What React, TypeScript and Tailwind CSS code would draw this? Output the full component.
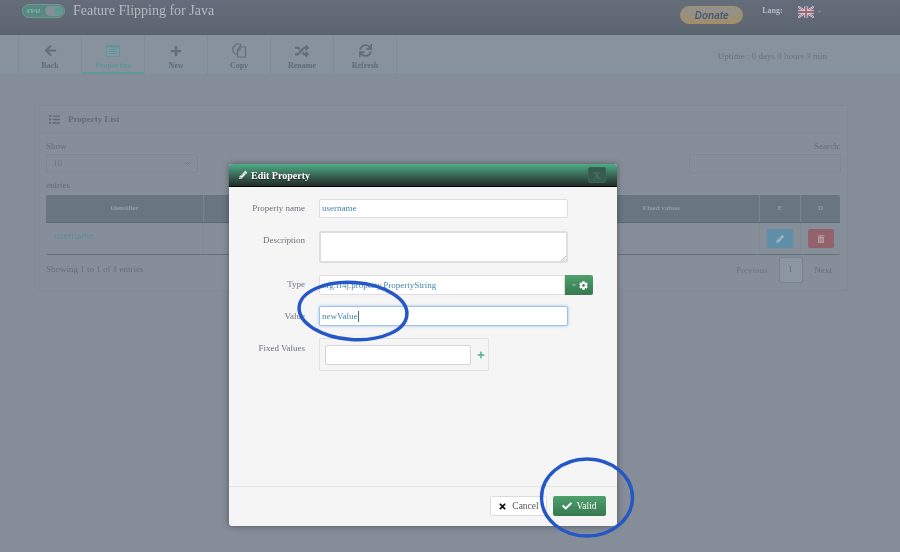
import { FaArrowLeft, FaPlus, FaRandom, FaSync, FaPencilAlt, FaTrashAlt, FaCog, FaCheck, FaTimes, FaCaretDown, FaList } from "react-icons/fa";

const serif = "font-['Liberation_Serif','Times_New_Roman',serif]";

function PropsIcon() {
  return (
    <svg width="14" height="12" viewBox="0 0 14 12" fill="none">
      <rect x="0" y="0" width="14" height="12" rx="1" fill="#64949a" />
      <rect x="1" y="2.5" width="12" height="8.5" fill="#7f9aa2" />
      <path d="M3 4.5h8M3 6.5h8M3 8.5h8" stroke="#64949a" strokeWidth="1" />
    </svg>
  );
}

function CopyIcon() {
  return (
    <svg width="15" height="15" viewBox="0 0 15 15" fill="none" stroke="currentColor" strokeWidth="1.2" strokeLinejoin="round">
      <path d="M1 8.5V4.5L4.5 1H8.5V4" />
      <path d="M1 8.5L3 11H5.5" />
      <path d="M5.5 14V6.5L7.5 4H13.5V14Z" />
      <path d="M5.5 7H8V4.5" />
    </svg>
  );
}

function Flag() {
  return (
    <svg width="16" height="12" viewBox="0 0 60 42">
      <rect width="60" height="42" fill="#5a6a95" />
      <path d="M0 0L60 42M60 0L0 42" stroke="#d5d8e0" strokeWidth="8" />
      <path d="M0 0L60 42M60 0L0 42" stroke="#a8616f" strokeWidth="3" />
      <path d="M30 0V42M0 21H60" stroke="#d5d8e0" strokeWidth="13" />
      <path d="M30 0V42M0 21H60" stroke="#a8616f" strokeWidth="7" />
    </svg>
  );
}

function ToolItem({ icon, label, active }: { icon: React.ReactNode; label: string; active?: boolean }) {
  return (
    <div className={`w-[63px] h-full flex flex-col items-center border-r border-[#818c96] ${active ? "border-b-2 border-b-[#5f9b97] text-[#5f9496]" : "text-[#636d78]"}`}>
      <div className="h-[23px] mt-[4px] flex items-center justify-center">{icon}</div>
      <div className="text-[8px] font-bold leading-[10px] mt-[-1px]">{label}</div>
    </div>
  );
}

function Field({ label, children, top, pt = "pt-[2px]" }: { label: string; children: React.ReactNode; top: string; pt?: string }) {
  return (
    <div className={`flex ${top}`}>
      <div className={`w-[76px] text-right text-[9px] leading-[14px] text-[#6d727a] shrink-0 ${pt}`}>{label}</div>
      <div className="ml-[14px]">{children}</div>
    </div>
  );
}

export default function App() {
  return (
    <div className={`relative w-[900px] h-[552px] overflow-hidden bg-[#858d98] blur-[0.35px] ${serif}`}>
      {/* Header */}
      <header className="h-[35px] bg-gradient-to-b from-[#666d7a] to-[#5b6570] border-b border-[#57606b] flex items-start">
        <div className="ml-[22px] mt-[4px] w-[43px] h-[14px] rounded-full bg-[#568a80] border border-[#6f9a92] flex items-center justify-between pl-[4px] pr-[1px]">
          <span className="text-[6px] font-bold text-[#8fb3ac] leading-none">FF4J</span>
          <span className="w-[18px] h-[10px] rounded-full bg-[#868e98] flex justify-end items-center pr-[1px]">
            <span className="w-[8px] h-[8px] rounded-full bg-[#5f9a8f]" />
          </span>
        </div>
        <div className="ml-[8px] mt-[0px] text-[14px] leading-[22px] text-[#b4bac1]">Feature Flipping for Java</div>
        <div className="ml-[466px] mt-[6px] w-[63px] h-[18px] rounded-full bg-gradient-to-b from-[#8f9191] to-[#a08f6c] border border-[#a98f5e] flex items-center justify-center">
          <span className="font-['Liberation_Sans',sans-serif] italic font-bold text-[10px] text-[#4c5a78]">Donate</span>
        </div>
        <div className="ml-[19px] mt-[6px] text-[8px] font-bold leading-[10px] text-[#b4bac1]">Lang:</div>
        <div className="ml-[15px] mt-[6px]"><Flag /></div>
        <FaCaretDown className="ml-[2px] mt-[8px] text-[#7c8590]" size={7} />
      </header>

      {/* Toolbar */}
      <nav className="h-[40px] bg-[#87929c] border-b border-[#818b95] flex pl-[18px]">
        <div className="flex h-full border-l border-[#818c96]">
          <ToolItem icon={<FaArrowLeft size={13} />} label="Back" />
          <ToolItem icon={<PropsIcon />} label="Properties" active />
          <ToolItem icon={<FaPlus size={12} />} label="New" />
          <ToolItem icon={<CopyIcon />} label="Copy" />
          <ToolItem icon={<FaRandom size={14} />} label="Rename" />
          <ToolItem icon={<FaSync size={13} />} label="Refresh" />
        </div>
        <div className="ml-auto mr-[73px] mt-[16px] text-[9px] leading-[10px] text-[#6a737f]">Uptime : 0 days 0 hours 3 min</div>
      </nav>

      {/* Panel */}
      <section className="ml-[39px] mt-[30px] w-[809px] h-[186px] border border-[#808994] rounded-[2px] bg-[#868f99]">
        <div className="h-[28px] border-b border-[#808994] flex items-center pl-[9px] gap-[8px] text-[#636c77]">
          <FaList size={11} />
          <span className="text-[9px] font-bold">Property List</span>
        </div>
        <div className="px-[6px]">
          <div className="flex justify-between pt-[7px] text-[9px] leading-[11px] text-[#646d78]">
            <span>Show</span>
            <span>Search:</span>
          </div>
          <div className="flex justify-between mt-[2px]">
            <div className="w-[152px] h-[19px] border border-[#7e8792] rounded-[2px] flex items-center justify-between px-[6px] text-[9px] text-[#6e7782]">
              <span>10</span>
              <svg width="7" height="5" viewBox="0 0 7 5"><path d="M1 1l2.5 2.5L6 1" stroke="#6b7480" fill="none" /></svg>
            </div>
            <div className="w-[152px] h-[19px] border border-[#7e8792] rounded-[2px]" />
          </div>
          <div className="text-[9px] leading-[11px] mt-[7px] text-[#646d78]">entries</div>
          <div className="mt-[4px] w-[794px] border-b border-[#67717c] rounded-b-[2px]">
            <div className="h-[28px] bg-[#697581] rounded-t-[2px] border-b border-[#5e6873] flex text-[7px] font-bold text-[#939da7] items-center text-center">
              <div className="w-[158px] h-full flex items-center justify-center border-r border-[#7b8691]">Identifier</div>
              <div className="w-[556px] h-full flex items-center justify-end pr-[79px] border-r border-[#7b8691]">Fixed values</div>
              <div className="w-[41px] h-full flex items-center justify-center border-r border-[#7b8691]">E</div>
              <div className="w-[39px] h-full flex items-center justify-center">D</div>
            </div>
            <div className="h-[31px] flex">
              <div className="w-[158px] pl-[8px] pt-[9px] border-r border-[#808994] font-['DejaVu_Sans',sans-serif] text-[8px] leading-[10px] text-[#5f8a9c]">username</div>
              <div className="w-[556px] border-r border-[#808994]" />
              <div className="w-[41px] flex items-center justify-center border-r border-[#808994]">
                <div className="w-[26px] h-[19px] rounded-[2px] bg-[#5f8ea8] flex items-center justify-center text-[#a2b8c4]"><FaPencilAlt size={8} /></div>
              </div>
              <div className="w-[39px] flex items-center justify-center">
                <div className="w-[26px] h-[19px] rounded-[2px] bg-[#94626b] flex items-center justify-center text-[#b09ea4]"><FaTrashAlt size={8} /></div>
              </div>
            </div>
          </div>
          <div className="flex justify-between items-start text-[9px] text-[#656e79]">
            <div className="mt-[9px] leading-[11px]">Showing 1 to 1 of 1 entries</div>
            <div className="flex items-start mt-[2px] mr-[9px]">
              <span className="mt-[8px] leading-[11px] text-[#6a7580]">Previous</span>
              <span className="ml-[11px] w-[24px] h-[26px] border border-[#79838e] rounded-[2px] bg-[#8b96a1] flex items-center justify-center">1</span>
              <span className="ml-[12px] mt-[8px] leading-[11px]">Next</span>
            </div>
          </div>
        </div>
      </section>

      {/* Modal */}
      <div className="absolute left-[229px] top-[164px] w-[388px] h-[362px] rounded-[3px] bg-[#f5f5f5] shadow-[0_0_6px_rgba(40,40,50,0.55)] flex flex-col overflow-hidden">
        <div className="h-[23px] bg-gradient-to-b from-[#4cad87] to-[#222c29] border-b border-black flex items-center pl-[10px] shrink-0">
          <FaPencilAlt size={8} className="text-white" />
          <span className="ml-[4px] text-[10px] font-bold text-white [text-shadow:0_1px_1px_#222]">Edit Property</span>
          <div className="ml-auto mr-[11px] w-[18px] h-[16px] rounded-[2px] bg-[#365c4f] border border-[#3a6354] flex items-center justify-center text-[10px] font-bold text-[#4d7164]">X</div>
        </div>
        <div className="flex-1 pt-[12px]">
          <Field label="Property name" top="">
            <div className="w-[249px] h-[19px] bg-white border border-[#dedede] rounded-[2px] px-[2px] text-[9px] leading-[17px] text-[#4a86ab]">username</div>
          </Field>
          <Field label="Description" top="mt-[13px]">
            <div className="relative w-[249px] h-[32px] bg-white border-2 border-[#dedede] rounded-[2px]">
              <svg className="absolute right-0 bottom-0" width="6" height="6" viewBox="0 0 6 6"><path d="M1 6L6 1M3.5 6L6 3.5" stroke="#999" strokeWidth="0.7" /></svg>
            </div>
          </Field>
          <Field label="Type" top="mt-[12px]">
            <div className="flex">
              <div className="w-[246px] h-[20px] bg-white border border-[#dedede] rounded-l-[2px] px-[2px] text-[9px] leading-[18px] text-[#4a86ab]">org.ff4j.property.PropertyString</div>
              <div className="w-[28px] h-[20px] bg-gradient-to-b from-[#4fa06d] to-[#37784f] rounded-r-[2px] flex items-center justify-center gap-[2px] text-white">
                <FaCaretDown size={6} className="text-[#8bbd9d]" />
                <FaCog size={9} />
              </div>
            </div>
          </Field>
          <Field label="Value" top="mt-[11px]" pt="pt-[3px]">
            <div className="w-[249px] h-[20px] bg-white border border-[#9cc4ec] rounded-[2px] shadow-[0_0_3px_#9cc4ec] px-[2px] text-[9px] leading-[18px] text-[#4a86ab] flex items-center">newValue<span className="w-px h-[11px] bg-[#4a6a8a]" /></div>
          </Field>
          <Field label="Fixed Values" top="mt-[12px]" pt="pt-[3px]">
            <div className="w-[170px] h-[33px] border border-[#e0e0e0] rounded-[2px] flex items-center pl-[5px]">
              <div className="w-[146px] h-[20px] bg-white border border-[#d5d5d5] rounded-[2px]" />
              <FaPlus size={8} className="ml-[6px] text-[#4fb48c]" />
            </div>
          </Field>
        </div>
        <div className="h-[40px] border-t border-[#e4e4e4] flex items-start justify-end pt-[9px] pr-[11px] gap-[6px] shrink-0">
          <div className="w-[57px] h-[20px] bg-white border border-[#dcdcdc] rounded-[2px] flex items-center justify-center gap-[5px] text-[9.5px] text-[#555]">
            <FaTimes size={9} className="text-[#111]" />
            <span>Cancel</span>
          </div>
          <div className="w-[53px] h-[20px] bg-gradient-to-b from-[#4fa06d] to-[#37784f] rounded-[2px] flex items-center justify-center gap-[4px] text-[9.5px] text-white">
            <FaCheck size={10} />
            <span>Valid</span>
          </div>
        </div>
      </div>

      {/* Hand-drawn annotations */}
      <svg className="absolute left-0 top-0 pointer-events-none" width="900" height="552" viewBox="0 0 900 552" fill="none">
        <ellipse cx="353" cy="311" rx="54" ry="28.5" transform="rotate(4 353 311)" stroke="#2557c6" strokeWidth="3.5" />
        <ellipse cx="587" cy="497.5" rx="45.5" ry="38.5" stroke="#2557c6" strokeWidth="3.5" />
      </svg>
    </div>
  );
}
